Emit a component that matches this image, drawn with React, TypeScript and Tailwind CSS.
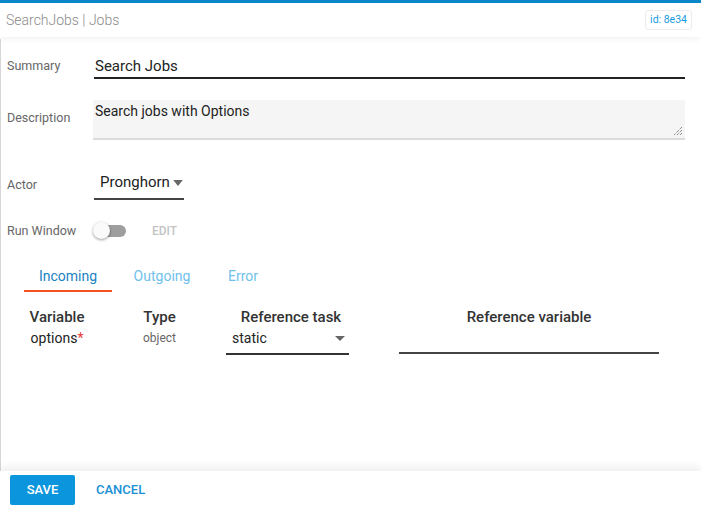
export default function App() {
  return (
    <div
      className="w-[701px] h-[508px] bg-white flex flex-col overflow-hidden text-[#333]"
      style={{ fontFamily: "Roboto, 'Noto Sans', sans-serif" }}
    >
      {/* Top accent */}
      <div className="h-[3px] bg-[#0a88c9] shrink-0" />

      {/* Header */}
      <div className="h-[34px] shrink-0 flex items-center justify-between pl-[6px] pr-[9px] shadow-[0_2px_6px_rgba(0,0,0,0.06)] relative z-10">
        <span className="text-[14px] text-[#8a8a8a] font-light">SearchJobs | Jobs</span>
        <span className="text-[10.5px] text-[#1a9be0] border border-[#ececec] rounded-[3px] px-[4px] py-[2px] leading-[14px]">
          id: 8e34
        </span>
      </div>

      {/* Body */}
      <div className="flex-1 border-l border-[#d6d6d6] mt-[2px] pr-[16px] text-[13px]">
        {/* Summary */}
        <div className="flex items-end h-[40px]">
          <div className="w-[93px] pl-[6px] text-[12.5px] text-[#666] pb-[3px]">Summary</div>
          <div className="flex-1 border-b-2 border-[#222] pb-[1px]">
            <div className="text-[15px] text-[#222] pl-[1px] leading-[20px]">Search Jobs</div>
          </div>
        </div>

        {/* Description */}
        <div className="flex items-center mt-[21px]">
          <div className="w-[92px] pl-[6px] text-[12.5px] text-[#666] pb-[4px]">Description</div>
          <div className="flex-1 h-[40px] bg-[#f5f5f5] border-b-2 border-[#dcdcdc] relative">
            <div className="text-[14px] text-[#222] pl-[2px] pt-[1px]">Search jobs with Options</div>
            <svg className="absolute right-[2px] bottom-[2px]" width="10" height="10" viewBox="0 0 10 10">
              <path d="M9 1L1 9M9 4L4 9M9 7L7 9" stroke="#555" strokeWidth="1" strokeDasharray="1 1" />
            </svg>
          </div>
        </div>

        {/* Actor */}
        <div className="flex items-center mt-[31px]">
          <div className="w-[93px] pl-[6px] text-[12.5px] text-[#666]">Actor</div>
          <div className="w-[90px] border-b-2 border-[#444] flex items-center pl-[6px] pb-[4px]">
            <span className="text-[15px] text-[#222]">Pronghorn</span>
            <svg width="12" height="6" viewBox="0 0 10 5" className="ml-[2px] mt-[2px]">
              <path d="M1 0h8L5 5z" fill="#666" />
            </svg>
          </div>
        </div>

        {/* Run window */}
        <div className="flex items-center mt-[22px]">
          <div className="w-[92px] pl-[6px] text-[12.5px] text-[#666]">Run Window</div>
          <div className="relative w-[33px] h-[18px] flex items-center">
            <div className="absolute left-[2px] right-0 h-[12px] rounded-full bg-[#9e9e9e]" />
            <div className="absolute left-0 w-[17px] h-[17px] rounded-full bg-[#fafafa] shadow-[0_1px_3px_rgba(0,0,0,0.4)]" />
          </div>
          <span className="ml-[26px] text-[12px] font-medium text-[#c4c4c4]">EDIT</span>
        </div>

        {/* Tabs */}
        <div className="flex mt-[26px] ml-[23px] text-[14px]">
          <div className="w-[88px] text-center text-[#1a82c4] border-b-2 border-[#f4511e] pb-[3px]">Incoming</div>
          <div className="w-[100px] text-center text-[#6fc1ec] pb-[3px]">Outgoing</div>
          <div className="w-[62px] text-center text-[#6fc1ec] pb-[3px]">Error</div>
        </div>

        {/* Variables table */}
        <div className="flex mt-[15px] text-[#222]">
          <div className="w-[82px] ml-[15px] shrink-0 flex flex-col items-center">
            <div className="text-[15px] font-medium text-[#333] leading-[20px]">Variable</div>
            <div className="text-[14px] leading-[23px]">
              options<span className="text-[#e53935]">*</span>
            </div>
          </div>
          <div className="w-[123px] shrink-0 flex flex-col items-center">
            <div className="text-[15px] font-medium text-[#333] leading-[20px]">Type</div>
            <div className="text-[12px] text-[#666] leading-[23px]">object</div>
          </div>
          <div className="w-[140px] shrink-0 flex flex-col items-center">
            <div className="text-[15px] font-medium text-[#333] leading-[20px]">Reference task</div>
            <div className="self-start ml-[5px] w-[123px] border-b-2 border-[#333] flex items-center justify-between pl-[6px] pr-[4px] pb-[3px] leading-[23px]">
              <span className="text-[14px]">static</span>
              <svg width="10" height="5" viewBox="0 0 10 5">
                <path d="M0 0h10L5 5z" fill="#666" />
              </svg>
            </div>
          </div>
          <div className="w-[336px] shrink-0 flex flex-col items-center">
            <div className="text-[15px] font-medium text-[#333] leading-[20px]">Reference variable</div>
            <div className="w-[260px] h-[27px] border-b-2 border-[#444]" />
          </div>
        </div>
      </div>

      {/* Footer */}
      <div className="h-[37px] shrink-0 flex items-center pl-[10px] shadow-[0_-4px_8px_rgba(0,0,0,0.07)] relative">
        <button className="w-[65px] h-[30px] bg-[#0b95dc] rounded-[2px] text-white text-[13px] font-medium">
          SAVE
        </button>
        <button className="ml-[21px] text-[#1a8fd6] text-[13px] font-medium">CANCEL</button>
      </div>
    </div>
  );
}
